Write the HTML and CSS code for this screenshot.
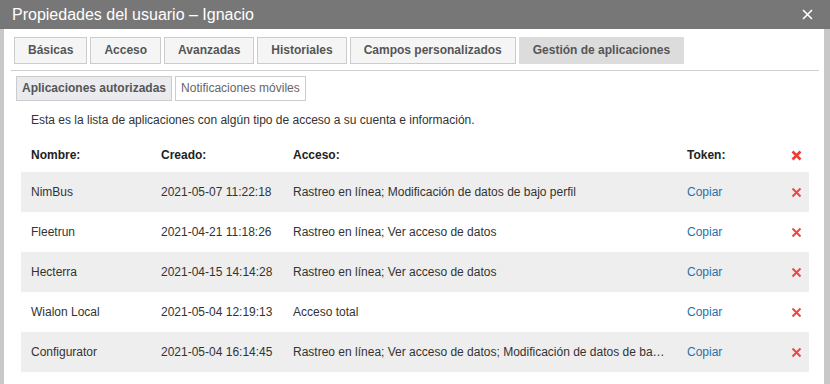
FILE: index.html
```html
<!DOCTYPE html>
<html lang="es">
<head>
<meta charset="utf-8">
<link rel="stylesheet" href="styles.css">
</head>
<body>
<div class="window">
  <div class="titlebar">
    <span class="title">Propiedades del usuario – Ignacio</span>
    <svg class="close" width="11" height="11" viewBox="0 0 11 11"><path d="M1 1L10 10M10 1L1 10" stroke="#fff" stroke-width="1.6" fill="none"/></svg>
  </div>
  <div class="body">
    <div class="content">
      <div class="tabs">
        <div class="tab">Básicas</div>
        <div class="tab">Acceso</div>
        <div class="tab">Avanzadas</div>
        <div class="tab">Historiales</div>
        <div class="tab">Campos personalizados</div>
        <div class="tab active">Gestión de aplicaciones</div>
      </div>
      <div class="subtabs">
        <div class="subtab active">Aplicaciones autorizadas</div>
        <div class="subtab">Notificaciones móviles</div>
      </div>
      <p class="desc">Esta es la lista de aplicaciones con algún tipo de acceso a su cuenta e información.</p>
      <div class="table">
        <div class="row head">
          <div class="cell">Nombre:</div>
          <div class="cell">Creado:</div>
          <div class="cell">Acceso:</div>
          <div class="cell">Token:</div>
          <div class="cell x"><svg width="11" height="11" viewBox="0 0 11 11"><path d="M1.5 1.5L9.5 9.5M9.5 1.5L1.5 9.5" stroke="#ee3b33" stroke-width="2.6" fill="none"/></svg></div>
        </div>
        <div class="row alt">
          <div class="cell">NimBus</div>
          <div class="cell">2021-05-07 11:22:18</div>
          <div class="cell trunc">Rastreo en línea; Modificación de datos de bajo perfil</div>
          <div class="cell link">Copiar</div>
          <div class="cell x"><svg width="11" height="11" viewBox="0 0 11 11"><path d="M1.5 1.5L9.5 9.5M9.5 1.5L1.5 9.5" stroke="#f0453d" stroke-width="2" fill="none"/></svg></div>
        </div>
        <div class="row">
          <div class="cell">Fleetrun</div>
          <div class="cell">2021-04-21 11:18:26</div>
          <div class="cell trunc">Rastreo en línea; Ver acceso de datos</div>
          <div class="cell link">Copiar</div>
          <div class="cell x"><svg width="11" height="11" viewBox="0 0 11 11"><path d="M1.5 1.5L9.5 9.5M9.5 1.5L1.5 9.5" stroke="#f0453d" stroke-width="2" fill="none"/></svg></div>
        </div>
        <div class="row alt">
          <div class="cell">Hecterra</div>
          <div class="cell">2021-04-15 14:14:28</div>
          <div class="cell trunc">Rastreo en línea; Ver acceso de datos</div>
          <div class="cell link">Copiar</div>
          <div class="cell x"><svg width="11" height="11" viewBox="0 0 11 11"><path d="M1.5 1.5L9.5 9.5M9.5 1.5L1.5 9.5" stroke="#f0453d" stroke-width="2" fill="none"/></svg></div>
        </div>
        <div class="row">
          <div class="cell">Wialon Local</div>
          <div class="cell">2021-05-04 12:19:13</div>
          <div class="cell trunc">Acceso total</div>
          <div class="cell link">Copiar</div>
          <div class="cell x"><svg width="11" height="11" viewBox="0 0 11 11"><path d="M1.5 1.5L9.5 9.5M9.5 1.5L1.5 9.5" stroke="#f0453d" stroke-width="2" fill="none"/></svg></div>
        </div>
        <div class="row alt">
          <div class="cell">Configurator</div>
          <div class="cell">2021-05-04 16:14:45</div>
          <div class="cell trunc">Rastreo en línea; Ver acceso de datos; Modificación de datos de bajo perfil</div>
          <div class="cell link">Copiar</div>
          <div class="cell x"><svg width="11" height="11" viewBox="0 0 11 11"><path d="M1.5 1.5L9.5 9.5M9.5 1.5L1.5 9.5" stroke="#f0453d" stroke-width="2" fill="none"/></svg></div>
        </div>
      </div>
    </div>
  </div>
</div>
</body>
</html>
```

FILE: styles.css
```css
html, body {
  margin: 0;
  padding: 0;
  background: #fff;
}
body {
  font-family: "Liberation Sans", Arial, sans-serif;
  font-size: 12px;
  color: #333;
}
.window {
  width: 830px;
  height: 384px;
  display: flex;
  flex-direction: column;
  overflow: hidden;
}
.titlebar {
  height: 29px;
  flex: none;
  background: #777;
  color: #fff;
  display: flex;
  align-items: center;
  justify-content: space-between;
  padding: 0 17px 0 12px;
  font-size: 16px;
}
.title {
  line-height: 29px;
}
.close {
  display: block;
}
.body {
  flex: 1;
  border-left: 4px solid #c8c8c8;
  border-right: 6px solid #c8c8c8;
  background: #fff;
  padding: 8px 5px 0 7px;
}
.tabs {
  display: flex;
  gap: 3px;
  padding: 0 0 6px 3px;
  border-bottom: 1px solid #d0d0d0;
}
.tab {
  height: 25px;
  line-height: 25px;
  padding: 0 13px;
  border: 1px solid #ccc;
  background: #f5f5f5;
  color: #555;
  font-weight: bold;
  font-size: 12px;
}
.tab.active {
  background: #dcdcdc;
  border-color: #dcdcdc;
}
.subtabs {
  display: flex;
  gap: 3px;
  margin: 5px 0 0 5px;
}
.subtab {
  height: 23px;
  line-height: 23px;
  padding: 0 5px;
  border: 1px solid #ccc;
  background: #fff;
  color: #666;
}
.subtab.active {
  background: #e9ebee;
  color: #555;
  font-weight: bold;
}
.desc {
  margin: 12px 0 0 20px;
  line-height: 14px;
  color: #333;
}
.table {
  margin: 11px 10px 0 10px;
}
.row {
  display: grid;
  grid-template-columns: 130px 132px 394px 108px 24px;
  height: 40px;
  align-items: center;
}
.row.head {
  height: 34px;
  font-weight: bold;
  color: #222;
}
.row.alt {
  background: #eee;
}
.cell {
  padding: 0 10px;
  white-space: nowrap;
}
.trunc {
  overflow: hidden;
  text-overflow: ellipsis;
}
.link {
  color: #2672ad;
}
.cell.x {
  padding: 0 0 0 6px;
  display: flex;
  align-items: center;
}
.cell.x svg {
  display: block;
}
```
